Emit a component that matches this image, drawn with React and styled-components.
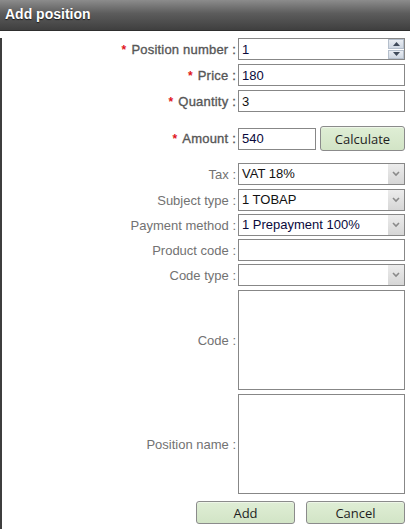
import React from "react";
import styled, { createGlobalStyle } from "styled-components";

const GlobalStyle = createGlobalStyle`
  html, body {
    margin: 0;
    padding: 0;
    background: #fff;
  }
  body {
    font-family: "Liberation Sans", Arial, sans-serif;
  }
`;

const Dialog = styled.div`
  width: 410px;
  height: 529px;
  overflow: hidden;
  background: #fff;
`;

const TitleBar = styled.div`
  border-bottom: 1px solid #2e2e2e;
  background: linear-gradient(#8c8c8c 0%, #5c5c5c 45%, #3f3f3f 100%);
  display: flex;
  align-items: center;
  padding-left: 5px;
  padding-bottom: 2px;
  box-sizing: border-box;
  height: 31px;
  color: #fff;
  font: bold 14px "Liberation Sans", Arial, sans-serif;
  text-shadow: 0 1px 1px #1a1a1a;
`;

const Body = styled.div`
  border-left: 2px solid #3e3e3e;
  height: 498px;
  box-sizing: border-box;
`;

const Row = styled.div`
  display: grid;
  grid-template-columns: 234px 167px;
  column-gap: 2px;
  align-items: center;
  margin-top: ${(p) => p.$mt || 0}px;
`;

const Label = styled.label`
  text-align: right;
  font-size: 13px;
  color: ${(p) => (p.$required ? "#575757" : "#727272")};
  -webkit-text-stroke: ${(p) => (p.$required ? "0.35px #575757" : "0")};
  letter-spacing: ${(p) => (p.$required ? "0.2px" : "0")};
  white-space: nowrap;
`;

const Star = styled.span`
  color: #e0161c;
  -webkit-text-stroke: 0;
  font-weight: bold;
  font-size: 12px;
  margin-right: 5px;
`;

const fieldBase = `
  box-sizing: border-box;
  border: 1px solid #878787;
  background: #fff;
  font: 13px "Liberation Sans", Arial, sans-serif;
  color: #0a0a3c;
  padding: 0 3px;
  margin: 0;
  outline: none;
`;

const TextInput = styled.input`
  ${fieldBase}
  height: 22px;
  width: ${(p) => p.$w || 167}px;
`;

const TextArea = styled.textarea`
  ${fieldBase}
  height: 100px;
  width: 167px;
  resize: none;
  display: block;
`;

const Boxed = styled.div`
  position: relative;
  width: 167px;
  height: 22px;
`;

const SelectField = styled.div`
  ${fieldBase}
  height: 22px;
  width: 167px;
  line-height: 20px;
  color: ${(p) => p.$color || "#0a0a3c"};
`;

const ArrowBox = styled.div`
  position: absolute;
  right: 1px;
  top: 1px;
  width: 16px;
  height: 20px;
  background: linear-gradient(#ececec, #d6d6d6);
  display: flex;
  align-items: center;
  justify-content: center;
`;

const Spinner = styled.div`
  position: absolute;
  right: 1px;
  top: 1px;
  width: 16px;
  height: 20px;
  display: flex;
  flex-direction: column;
  gap: 1px;
`;

const SpinButton = styled.div`
  flex: 1;
  background: linear-gradient(#e9edf3, #cfd7e2);
  border: 1px solid #b5bfcc;
  box-sizing: border-box;
  display: flex;
  align-items: center;
  justify-content: center;
`;

const Inline = styled.div`
  display: flex;
  align-items: center;
  gap: 4px;
`;

const Button = styled.button`
  box-sizing: border-box;
  width: ${(p) => p.$w || 99}px;
  height: ${(p) => p.$h || 23}px;
  border: 1px solid #8b8b8b;
  border-radius: 3px;
  background: linear-gradient(#dfeed5, #d2e4c6);
  box-shadow: inset 0 1px 0 #eef6e8;
  font: 13px "Open Sans", "DejaVu Sans", sans-serif;
  color: #1e1e1e;
  padding: 0;
  cursor: pointer;
`;

const ButtonRow = styled.div`
  display: flex;
  justify-content: flex-end;
  gap: 11px;
  padding-right: 5px;
  margin-top: 7px;
`;

const Chevron = () => (
  <svg width="8" height="6" viewBox="0 0 8 6">
    <path d="M1 1 L4 4 L7 1" fill="none" stroke="#8a8a8a" strokeWidth="1.6" />
  </svg>
);

const Tri = ({ up }) => (
  <svg width="7" height="4" viewBox="0 0 7 4">
    <path d={up ? "M0 4 L3.5 0 L7 4 Z" : "M0 0 L3.5 4 L7 0 Z"} fill="#3f4a5a" />
  </svg>
);

function Select({ value, color }) {
  return (
    <Boxed>
      <SelectField $color={color}>{value}</SelectField>
      <ArrowBox>
        <Chevron />
      </ArrowBox>
    </Boxed>
  );
}

function Field({ label, required, mt, children }) {
  return (
    <Row $mt={mt}>
      <Label $required={required}>
        {required && <Star>*</Star>}
        {label} :
      </Label>
      {children}
    </Row>
  );
}

export default function App() {
  return (
    <Dialog>
      <GlobalStyle />
      <TitleBar>Add position</TitleBar>
      <Body>
        <Field label="Position number" required mt={7}>
          <Boxed>
            <TextInput defaultValue="1" />
            <Spinner>
              <SpinButton>
                <Tri up />
              </SpinButton>
              <SpinButton>
                <Tri />
              </SpinButton>
            </Spinner>
          </Boxed>
        </Field>
        <Field label="Price" required mt={4}>
          <TextInput defaultValue="180" />
        </Field>
        <Field label="Quantity" required mt={4}>
          <TextInput defaultValue="3" style={{ color: "#111" }} />
        </Field>
        <Field label="Amount" required mt={14}>
          <Inline>
            <TextInput defaultValue="540" $w={78} />
            <Button $w={85} $h={25}>
              Calculate
            </Button>
          </Inline>
        </Field>
        <Field label="Tax" mt={12}>
          <Select value="VAT 18%" color="#111" />
        </Field>
        <Field label="Subject type" mt={4}>
          <Select value="1 TOBAP" color="#111" />
        </Field>
        <Field label="Payment method" mt={3}>
          <Select value="1 Prepayment 100%" />
        </Field>
        <Field label="Product code" mt={3}>
          <TextInput />
        </Field>
        <Field label="Code type" mt={3}>
          <Select value="" />
        </Field>
        <Field label="Code" mt={4}>
          <TextArea />
        </Field>
        <Field label="Position name" mt={4}>
          <TextArea />
        </Field>
        <ButtonRow>
          <Button>Add</Button>
          <Button>Cancel</Button>
        </ButtonRow>
      </Body>
    </Dialog>
  );
}
